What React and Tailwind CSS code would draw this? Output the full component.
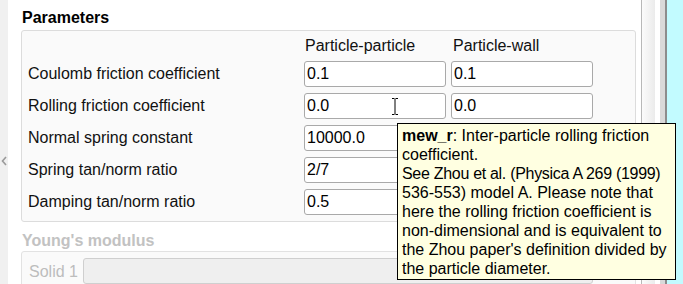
import React from "react";

const rows = [
  ["Coulomb friction coefficient", "0.1", "0.1"],
  ["Rolling friction coefficient", "0.0", "0.0"],
  ["Normal spring constant", "10000.0", "10000.0"],
  ["Spring tan/norm ratio", "2/7", "2/7"],
  ["Damping tan/norm ratio", "0.5", "0.5"],
];

function Field({ value }) {
  return (
    <input
      readOnly
      value={value}
      className="w-[142px] h-[26px] border border-[#a9a9a9] rounded-[3px] bg-white pl-[2px] text-[16px] text-black outline-none"
    />
  );
}

export default function App() {
  return (
    <div className="relative w-[683px] h-[284px] overflow-hidden flex font-['Liberation_Sans',Arial,sans-serif] text-[16px] leading-[18px] bg-white">
      {/* left collapse strip */}
      <div className="w-[8px] shrink-0 bg-[#f0f0f0] flex flex-col items-center pt-[156px]">
        <svg width="6" height="10" viewBox="0 0 6 10">
          <path d="M5 1 L1.5 5 L5 9" fill="none" stroke="#9a9a9a" strokeWidth="1.6" />
        </svg>
      </div>

      {/* main */}
      <div className="w-[633px] shrink-0 flex flex-col">
        <div className="pl-[14px] pt-[9px] h-[27px] font-bold text-black">Parameters</div>
        <div className="ml-[13px] mt-[3px] w-[615px] border border-[#dcdcdc] rounded-[3px] bg-[#fafafa] pl-[6px] pt-[6px] pb-[6px] flex flex-col">
          <div className="flex h-[18px] text-[#111]">
            <div className="w-[276px]" />
            <div className="w-[142px] pl-[1px]">Particle-particle</div>
            <div className="w-[142px] ml-[5px] pl-[2px]">Particle-wall</div>
          </div>
          <div className="flex flex-col gap-[6px] mt-[6px]">
            {rows.map(([label, a, b]) => (
              <div key={label} className="flex items-center h-[26px]">
                <div className="w-[276px] text-[#111]">{label}</div>
                <Field value={a} />
                <div className="w-[5px]" />
                <Field value={b} />
              </div>
            ))}
          </div>
        </div>
        <div className="pl-[14px] mt-[10px] h-[18px] font-bold text-[#c2c2c2]">Young's modulus</div>
        <div className="ml-[13px] mt-[1px] w-[615px] border border-[#e2e2e2] rounded-[3px] bg-[#fafafa] pl-[7px] pt-[6px] pb-[6px] flex items-center gap-[5px]">
          <div className="text-[#bdbdbd] pt-[2px]">Solid 1</div>
          <div className="h-[26px] w-[510px] border border-[#cfcfcf] rounded-[3px] bg-[#efefef]" />
        </div>
      </div>

      {/* right edge decorations */}
      <div className="w-[1px] shrink-0 bg-[#b8b8b8]" />
      <div className="w-[13px] shrink-0 bg-gradient-to-r from-[#fbfbfb] to-[#ebebeb]" />
      <div className="w-[5px] shrink-0 bg-white" />
      <div className="w-[5px] shrink-0 bg-[#d9d9d9]" />
      <div className="w-[2px] shrink-0 bg-[#8c8c8c]" />
      <div className="flex-1 bg-[#c2fbff]" />

      {/* text cursor */}
      <svg className="absolute left-[391px] top-[97px]" width="8" height="19" viewBox="0 0 8 19">
        <path d="M1 1.5 H3 M5 1.5 H7 M4 2 V17 M1 17.5 H3 M5 17.5 H7" stroke="#fff" strokeWidth="2.5" fill="none" />
        <path d="M1 1.5 H3.5 M4.5 1.5 H7 M4 2 V17 M1 17.5 H3.5 M4.5 17.5 H7" stroke="#000" strokeWidth="1" fill="none" />
      </svg>

      {/* tooltip */}
      <div className="absolute left-[397px] top-[123px] w-[279px] border border-black bg-[#ffffe1] pl-[4px] pt-[2px] pb-[1px] text-[16px] leading-[19px] text-black whitespace-nowrap">
        <div><span className="font-bold">mew_r</span>: Inter-particle rolling friction</div>
        <div>coefficient.</div>
        <div className="tracking-[-0.3px]">See Zhou et al. (Physica A 269 (1999)</div>
        <div>536-553) model A. Please note that</div>
        <div>here the rolling friction coefficient is</div>
        <div>non-dimensional and is equivalent to</div>
        <div>the Zhou paper's definition divided by</div>
        <div>the particle diameter.</div>
      </div>
    </div>
  );
}
